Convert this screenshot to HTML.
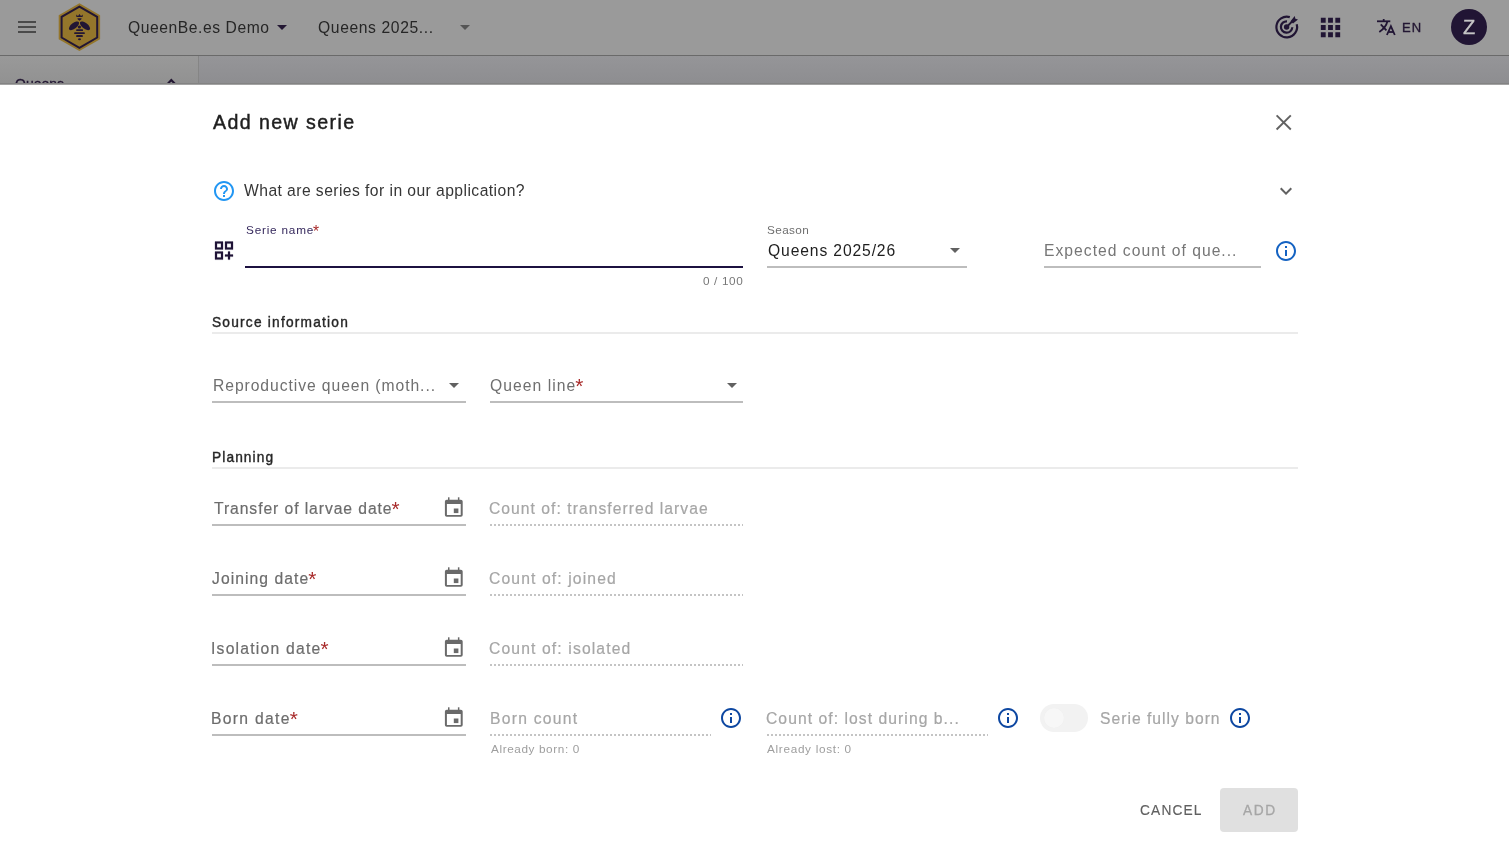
<!DOCTYPE html>
<html><head><meta charset="utf-8">
<style>
*{box-sizing:border-box;margin:0;padding:0}
html,body{width:1509px;height:852px;overflow:hidden;background:#fff;font-family:"Liberation Sans",sans-serif}
.a{position:absolute}
.t{position:absolute;white-space:nowrap;line-height:1;will-change:transform}
.req{color:#a82a2a;-webkit-text-stroke:0;font-size:1.3em;line-height:0;position:relative;top:.09em;margin-left:-1px}
.req.s{top:.18em}
#hdr{left:0;top:0;width:1509px;height:55px;background:#9a9a9a}
#hdrline{left:0;top:55px;width:1509px;height:2px;background:linear-gradient(#6a6a6a 50%,#8a8a8a 50%)}
#under{left:0;top:56px;width:1509px;height:29px;background:linear-gradient(#959598,#8d8d90)}
#side{left:0;top:56px;width:198px;height:29px;background:linear-gradient(#999,#919191)}
#vline{left:198px;top:56px;width:1px;height:29px;background:#858585}
#dlgshadow{left:0;top:83px;width:1509px;height:2px;background:linear-gradient(#838383 50%,#a3a3a3 50%)}
#dlg{left:0;top:85px;width:1509px;height:767px;background:#fff}
.ul{position:absolute;height:2px;background:#bdbdbd}
.dot{position:absolute;height:2px;background:repeating-linear-gradient(90deg,#c4c4c4 0 2px,transparent 2px 4px)}
.hr{position:absolute;left:212px;width:1086px;height:2px;background:#ebebeb}
.lab{font-size:16px;color:#6c6c6c;-webkit-text-stroke:.2px #6c6c6c}
.dis{font-size:16px;color:#a6a6a6;-webkit-text-stroke:.2px #a6a6a6}
</style></head><body>
<div id="hdr" class="a"></div>
<div id="hdrline" class="a"></div>
<div id="under" class="a"></div>
<div id="side" class="a"></div>
<div id="vline" class="a"></div>

<!-- hamburger -->
<div class="a" style="left:18px;top:21px;width:18px;height:2px;background:#4a4a4a"></div>
<div class="a" style="left:18px;top:26px;width:18px;height:2px;background:#4a4a4a"></div>
<div class="a" style="left:18px;top:31px;width:18px;height:2px;background:#4a4a4a"></div>

<!-- logo -->
<svg class="a" style="left:55px;top:0" width="50" height="55" viewBox="0 0 50 55">
  <polygon points="24.4,3.3 45.1,15.2 45.1,39.2 24.4,51.1 3.7,39.2 3.7,15.2" fill="#94762b"/>
  <polygon points="24.4,6.6 42.2,16.9 42.2,37.5 24.4,47.8 6.6,37.5 6.6,16.9" fill="none" stroke="#221634" stroke-width="2"/>
  <g fill="#221634">
  <polygon points="21.2,14.6 23.0,16.0 24.5,14.0 26.0,16.0 27.8,14.6 27.6,16.9 21.4,16.9"/>
  <polygon points="22.4,18.2 26.6,18.2 26.2,19.6 24.5,20.7 22.8,19.6"/>
  <ellipse cx="19" cy="25.8" rx="6.1" ry="2.8" transform="rotate(-38 19 25.8)"/>
  <ellipse cx="30" cy="25.8" rx="6.1" ry="2.8" transform="rotate(38 30 25.8)"/>
  <circle cx="24.4" cy="27" r="1.6"/>
  <rect x="21.2" y="29.2" width="6.8" height="1.8" rx=".6"/>
  <rect x="19.2" y="32.3" width="10.6" height="1.8" rx=".6"/>
  <rect x="21.2" y="35.1" width="6.6" height="2" rx=".6"/>
  <ellipse cx="24.5" cy="39.3" rx="1.5" ry="1"/>
  </g>
</svg>

<div class="t" style="left:127.90px;top:20.00px;font-size:15.68px;color:#262626;letter-spacing:0.552px">QueenBe.es Demo</div>
<svg class="a" style="left:276px;top:24px" width="12" height="7"><polygon points="1,1 11,1 6,6" fill="#231733"/></svg>
<div class="t" style="left:317.90px;top:20.00px;font-size:15.68px;color:#262626;letter-spacing:0.612px">Queens 2025...</div>
<svg class="a" style="left:459px;top:24px" width="12" height="7"><polygon points="1,1 11,1 6,6" fill="#555"/></svg>

<div class="t" style="left:1402px;top:21px;font-size:13px;color:#231733;letter-spacing:1px;-webkit-text-stroke:.35px #231733">EN</div>
<div class="a" style="left:1451px;top:9px;width:36px;height:36px;border-radius:50%;background:#211534"></div>
<div class="t" style="left:1463px;top:17px;font-size:20px;color:#c4c4c4;-webkit-text-stroke:.3px #c4c4c4">Z</div>

<div class="t" style="left:15px;top:77px;font-size:14px;color:#231733;-webkit-text-stroke:.3px #231733">Queens</div>


<!-- header icons -->
<svg class="a" style="left:1270px;top:10px" width="35" height="35" viewBox="0 0 35 35">
  <g fill="none" stroke="#211534" stroke-width="2.2">
    <path d="M26.7 14.2 A10.35 10.35 0 1 1 19.8 7.1"/>
    <path d="M22.3 17.3 A5.7 5.7 0 1 1 17.0 11.3"/>
    <line x1="16.6" y1="17" x2="22.2" y2="11.4" stroke-width="2"/>
  </g>
  <circle cx="16.6" cy="17" r="2.7" fill="#211534"/>
  <polygon points="24.7,5.9 25.4,8.7 28.0,9.4 23.0,13.6 20.5,11.2" fill="#211534"/>
</svg>
<svg class="a" style="left:1316px;top:13px" width="29" height="29" viewBox="0 0 24 24"><path fill="#211534" d="M4 8h4V4H4v4zm6 12h4v-4h-4v4zm-6 0h4v-4H4v4zm0-6h4v-4H4v4zm6 0h4v-4h-4v4zm6-10v4h4V4h-4zm-6 4h4V4h-4v4zm6 6h4v-4h-4v4zm0 6h4v-4h-4v4z"/></svg>
<svg class="a" style="left:1372px;top:14px" width="28" height="26" viewBox="0 0 28 26">
  <g fill="none" stroke="#211534" stroke-width="1.8" stroke-linecap="butt">
    <line x1="5" y1="7.3" x2="18.3" y2="7.3"/>
    <line x1="11.7" y1="5" x2="11.7" y2="7.3"/>
    <path d="M15.4 7.3 C14.5 11.5 11 15.5 7.3 18"/>
    <line x1="8.8" y1="10.4" x2="14.4" y2="16.4"/>
    <path d="M14.9 21 L18.9 12.2 L22.8 21"/>
    <line x1="16.5" y1="18" x2="21.3" y2="18"/>
  </g>
</svg>
<svg class="a" style="left:160px;top:71px" width="24" height="13" viewBox="0 0 24 13"><polyline points="6,14.6 11.3,9.1 16.6,14.6" fill="none" stroke="#231733" stroke-width="2.1"/></svg>
<div id="dlgshadow" class="a"></div>
<div id="dlg" class="a"></div>

<!-- dialog content -->
<div class="t" style="left:212.70px;top:113.00px;font-size:19.6px;color:#1f1f1f;letter-spacing:1.416px;-webkit-text-stroke:.45px #1f1f1f">Add new serie</div>
<div class="t" style="left:244.40px;top:183.00px;font-size:15.68px;color:#363636;letter-spacing:0.436px">What are series for in our application?</div>
<div class="t" style="left:245.50px;top:224.00px;font-size:11.76px;color:#35285c;letter-spacing:0.800px">Serie name<span class="req s" style="font-size:1.327em">*</span></div>
<div class="a" style="left:245px;top:266px;width:498px;height:2px;background:#1c1140"></div>
<div class="t" style="left:703.00px;top:275.00px;font-size:11.76px;color:#777;letter-spacing:0.650px">0 / 100</div>

<div class="t" style="left:767.20px;top:224.00px;font-size:11.76px;color:#6e6e6e;letter-spacing:0.380px">Season</div>
<div class="t" style="left:767.80px;top:243.00px;font-size:15.68px;color:#1e1e1e;letter-spacing:0.867px">Queens 2025/26</div>
<div class="ul" style="left:767px;top:266px;width:200px"></div>
<div class="t" style="left:1044.20px;top:243.00px;font-size:15.68px;color:#767676;letter-spacing:1.019px">Expected count of que...</div>
<div class="ul" style="left:1044px;top:266px;width:217px"></div>

<div class="t" style="left:212.20px;top:316.00px;font-size:13.72px;color:#262626;letter-spacing:1.214px;-webkit-text-stroke:.38px #262626">Source information</div>
<div class="hr" style="top:332px"></div>

<div class="t" style="left:212.60px;top:378.00px;font-size:15.68px;color:#6f6f6f;letter-spacing:0.934px">Reproductive queen (moth...</div>
<div class="ul" style="left:212px;top:401px;width:254px"></div>
<div class="t" style="left:490.00px;top:378.00px;font-size:15.68px;color:#6f6f6f;letter-spacing:1.040px">Queen line<span class="req" style="font-size:1.327em">*</span></div>
<div class="ul" style="left:490px;top:401px;width:253px"></div>

<div class="t" style="left:212.00px;top:451.00px;font-size:13.72px;color:#262626;letter-spacing:1.100px;-webkit-text-stroke:.38px #262626">Planning</div>
<div class="hr" style="top:467px"></div>

<div class="t lab" style="left:213.60px;top:501.00px;letter-spacing:0.930px;font-size:15.68px">Transfer of larvae date<span class="req" style="font-size:1.327em">*</span></div>
<div class="ul" style="left:212px;top:524px;width:254px"></div>
<div class="t dis" style="left:489.00px;top:501.00px;letter-spacing:1.031px;font-size:15.68px">Count of: transferred larvae</div>
<div class="dot" style="left:490px;top:524px;width:253px"></div>

<div class="t lab" style="left:212.20px;top:571.00px;letter-spacing:1.067px;font-size:15.68px">Joining date<span class="req" style="font-size:1.327em">*</span></div>
<div class="ul" style="left:212px;top:594px;width:254px"></div>
<div class="t dis" style="left:489.00px;top:571.00px;letter-spacing:1.130px;font-size:15.68px">Count of: joined</div>
<div class="dot" style="left:490px;top:594px;width:253px"></div>

<div class="t lab" style="left:211.20px;top:641.00px;letter-spacing:1.235px;font-size:15.68px">Isolation date<span class="req" style="font-size:1.327em">*</span></div>
<div class="ul" style="left:212px;top:664px;width:254px"></div>
<div class="t dis" style="left:489.00px;top:641.00px;letter-spacing:1.135px;font-size:15.68px">Count of: isolated</div>
<div class="dot" style="left:490px;top:664px;width:253px"></div>

<div class="t lab" style="left:211.20px;top:711.00px;letter-spacing:1.301px;font-size:15.68px">Born date<span class="req" style="font-size:1.327em">*</span></div>
<div class="ul" style="left:212px;top:734px;width:254px"></div>
<div class="t dis" style="left:489.60px;top:711.00px;letter-spacing:1.250px;font-size:15.68px">Born count</div>
<div class="dot" style="left:490px;top:734px;width:221px"></div>
<div class="t" style="left:490.60px;top:743.00px;font-size:11.76px;color:#9e9e9e;letter-spacing:0.607px">Already born: 0</div>

<div class="t dis" style="left:766.20px;top:711.00px;letter-spacing:1.056px;font-size:15.68px">Count of: lost during b...</div>
<div class="dot" style="left:767px;top:734px;width:221px"></div>
<div class="t" style="left:767.20px;top:743.00px;font-size:11.76px;color:#9e9e9e;letter-spacing:0.692px">Already lost: 0</div>

<div class="a" style="left:1040px;top:704px;width:48px;height:28px;border-radius:14px;background:#f2f2f2"></div>
<div class="a" style="left:1044px;top:708px;width:20px;height:20px;border-radius:50%;background:#f7f7f7;box-shadow:0 0 1px rgba(0,0,0,.04)"></div>
<div class="t dis" style="left:1099.70px;top:711.00px;letter-spacing:1.004px;font-size:15.68px">Serie fully born</div>

<div class="t" style="left:1140.40px;top:804.00px;font-size:13.72px;color:#606060;letter-spacing:1.170px;-webkit-text-stroke:.15px #606060">CANCEL</div>
<div class="a" style="left:1220px;top:788px;width:78px;height:44px;border-radius:4px;background:#e0e0e0"></div>
<div class="t" style="left:1243.20px;top:804.00px;font-size:13.72px;color:#a6a6a6;letter-spacing:1.550px;-webkit-text-stroke:.3px #a6a6a6">ADD</div>


<!-- dialog icons -->
<svg class="a" style="left:1270px;top:109px" width="28" height="28" viewBox="0 0 28 28"><g stroke="#616161" stroke-width="1.9"><line x1="6.6" y1="6.3" x2="20.8" y2="20.5"/><line x1="20.8" y1="6.3" x2="6.6" y2="20.5"/></g></svg>
<svg class="a" style="left:1274px;top:179px" width="24" height="24" viewBox="0 0 24 24"><path fill="#616161" d="M16.59 8.59L12 13.17 7.41 8.59 6 10l6 6 6-6z"/></svg>
<svg class="a" style="left:212px;top:179px" width="24" height="24" viewBox="0 0 24 24"><path fill="#2196f3" d="M11 18h2v-2h-2v2zm1-16C6.48 2 2 6.48 2 12s4.48 10 10 10 10-4.48 10-10S17.52 2 12 2zm0 18c-4.41 0-8-3.59-8-8s3.59-8 8-8 8 3.59 8 8-3.59 8-8 8zm0-14c-2.21 0-4 1.79-4 4h2c0-1.1.9-2 2-2s2 .9 2 2c0 2-3 1.75-3 5h2c0-2.250 3-2.5 3-5 0-2.21-1.79-4-4-4z"/></svg>
<svg class="a" style="left:212px;top:238px" width="24" height="24" viewBox="0 -0.6 24 24"><path fill="#1f1437" stroke="#1f1437" stroke-width=".25" d="M3 3v8h8V3H3zm6 6H5V5h4v4zm-6 4v8h8v-8H3zm6 6H5v-4h4v4zm4-16v8h8V3h-8zm6 6h-4V5h4v4zm-1 4h-2v3h-3v2h3v3h2v-3h3v-2h-3z"/></svg>
<svg class="a" style="left:1274px;top:239px" width="24" height="24" viewBox="0 0 24 24"><path fill="#1462c2" d="M11 7h2v2h-2zm0 4h2v6h-2zm1-9C6.48 2 2 6.48 2 12s4.48 10 10 10 10-4.48 10-10S17.52 2 12 2zm0 18c-4.41 0-8-3.59-8-8s3.59-8 8-8 8 3.59 8 8-3.59 8-8 8z"/></svg>
<svg class="a" style="left:719px;top:706px" width="24" height="24" viewBox="0 0 24 24"><path fill="#0d47a1" d="M11 7h2v2h-2zm0 4h2v6h-2zm1-9C6.48 2 2 6.48 2 12s4.48 10 10 10 10-4.48 10-10S17.52 2 12 2zm0 18c-4.41 0-8-3.59-8-8s3.59-8 8-8 8 3.59 8 8-3.59 8-8 8z"/></svg>
<svg class="a" style="left:996px;top:706px" width="24" height="24" viewBox="0 0 24 24"><path fill="#0d47a1" d="M11 7h2v2h-2zm0 4h2v6h-2zm1-9C6.48 2 2 6.48 2 12s4.48 10 10 10 10-4.48 10-10S17.52 2 12 2zm0 18c-4.41 0-8-3.59-8-8s3.59-8 8-8 8 3.59 8 8-3.59 8-8 8z"/></svg>
<svg class="a" style="left:1228px;top:706px" width="24" height="24" viewBox="0 0 24 24"><path fill="#0d47a1" d="M11 7h2v2h-2zm0 4h2v6h-2zm1-9C6.48 2 2 6.48 2 12s4.48 10 10 10 10-4.48 10-10S17.52 2 12 2zm0 18c-4.41 0-8-3.59-8-8s3.59-8 8-8 8 3.59 8 8-3.59 8-8 8z"/></svg>
<svg class="a" style="left:943px;top:238px" width="24" height="24" viewBox="0 0 24 24"><path fill="#616161" d="M7 10l5 5 5-5z"/></svg>
<svg class="a" style="left:442px;top:373px" width="24" height="24" viewBox="0 0 24 24"><path fill="#616161" d="M7 10l5 5 5-5z"/></svg>
<svg class="a" style="left:720px;top:373px" width="24" height="24" viewBox="0 0 24 24"><path fill="#616161" d="M7 10l5 5 5-5z"/></svg>
<svg class="a" style="left:440px;top:494px" width="28" height="28" viewBox="0 0 28 28"><g fill="#6a6a6a"><path d="M6.7 5.8h14.2a1.8 1.8 0 0 1 1.8 1.8v13.4a1.8 1.8 0 0 1-1.8 1.8H6.7a1.8 1.8 0 0 1-1.8-1.8V7.6a1.8 1.8 0 0 1 1.8-1.8zM6.9 9.9v11h13.8v-11z"/><rect x="8" y="3.3" width="1.5" height="3"/><rect x="17.9" y="3.3" width="1.5" height="3"/><rect x="13.8" y="14.5" width="4.6" height="4.6"/></g></svg>
<svg class="a" style="left:440px;top:564px" width="28" height="28" viewBox="0 0 28 28"><g fill="#6a6a6a"><path d="M6.7 5.8h14.2a1.8 1.8 0 0 1 1.8 1.8v13.4a1.8 1.8 0 0 1-1.8 1.8H6.7a1.8 1.8 0 0 1-1.8-1.8V7.6a1.8 1.8 0 0 1 1.8-1.8zM6.9 9.9v11h13.8v-11z"/><rect x="8" y="3.3" width="1.5" height="3"/><rect x="17.9" y="3.3" width="1.5" height="3"/><rect x="13.8" y="14.5" width="4.6" height="4.6"/></g></svg>
<svg class="a" style="left:440px;top:634px" width="28" height="28" viewBox="0 0 28 28"><g fill="#6a6a6a"><path d="M6.7 5.8h14.2a1.8 1.8 0 0 1 1.8 1.8v13.4a1.8 1.8 0 0 1-1.8 1.8H6.7a1.8 1.8 0 0 1-1.8-1.8V7.6a1.8 1.8 0 0 1 1.8-1.8zM6.9 9.9v11h13.8v-11z"/><rect x="8" y="3.3" width="1.5" height="3"/><rect x="17.9" y="3.3" width="1.5" height="3"/><rect x="13.8" y="14.5" width="4.6" height="4.6"/></g></svg>
<svg class="a" style="left:440px;top:704px" width="28" height="28" viewBox="0 0 28 28"><g fill="#6a6a6a"><path d="M6.7 5.8h14.2a1.8 1.8 0 0 1 1.8 1.8v13.4a1.8 1.8 0 0 1-1.8 1.8H6.7a1.8 1.8 0 0 1-1.8-1.8V7.6a1.8 1.8 0 0 1 1.8-1.8zM6.9 9.9v11h13.8v-11z"/><rect x="8" y="3.3" width="1.5" height="3"/><rect x="17.9" y="3.3" width="1.5" height="3"/><rect x="13.8" y="14.5" width="4.6" height="4.6"/></g></svg>
</body></html>
